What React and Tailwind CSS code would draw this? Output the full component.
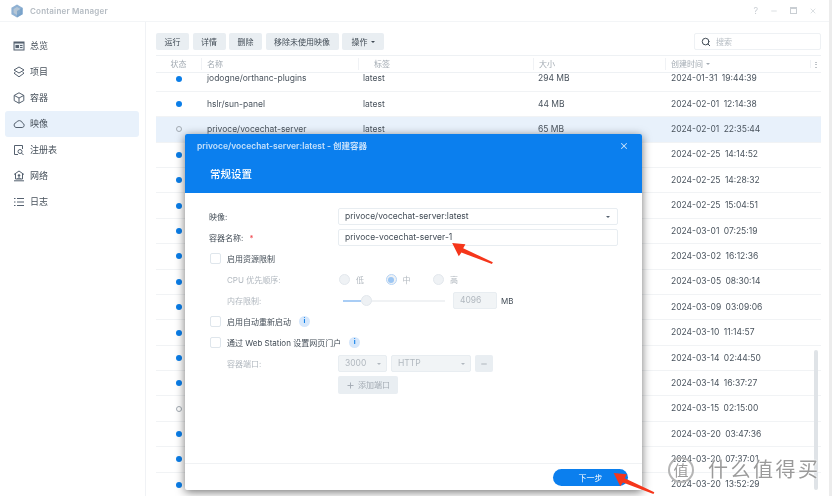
import { Search, X, Minus, Plus } from 'lucide-react';

const FONT = "font-['Inter','Noto_Sans_CJK_SC',sans-serif]";

const rows = [
  ['jodogne/orthanc-plugins', '294 MB', '2024-01-31 19:44:39', true],
  ['hslr/sun-panel', '44 MB', '2024-02-01 12:14:38', true],
  ['privoce/vocechat-server', '65 MB', '2024-02-01 22:35:44', false],
  ['', '', '2024-02-25 14:14:52', true],
  ['', '', '2024-02-25 14:28:32', true],
  ['', '', '2024-02-25 15:04:51', true],
  ['', '', '2024-03-01 07:25:19', true],
  ['', '', '2024-03-02 16:12:36', true],
  ['', '', '2024-03-05 08:30:14', true],
  ['', '', '2024-03-09 03:09:06', true],
  ['', '', '2024-03-10 11:14:57', true],
  ['', '', '2024-03-14 02:44:50', true],
  ['', '', '2024-03-14 16:37:27', true],
  ['', '', '2024-03-15 02:15:00', false],
  ['', '', '2024-03-20 03:47:36', true],
  ['', '', '2024-03-20 07:37:01', true],
  ['', '', '2024-03-20 13:52:29', true],
];

const OverviewIcon = () => (
  <svg width="12" height="12" viewBox="0 0 12 12" fill="none">
    <rect x="0.5" y="1.5" width="11" height="9" fill="#55616f" />
    <rect x="1.5" y="3.5" width="9" height="6" fill="#e8edf1" />
    <rect x="2.5" y="5" width="3.5" height="3" fill="#55616f" />
    <rect x="7" y="5" width="2.5" height="1" fill="#55616f" />
    <rect x="7" y="7" width="2.5" height="1" fill="#55616f" />
  </svg>
);
const LayersIcon = () => (
  <svg width="12" height="12" viewBox="0 0 12 12" fill="none" stroke="#55616f" strokeWidth="1">
    <path d="M6 1 L11 4 L6 7 L1 4 Z" />
    <path d="M2.5 6 L1 7.2 L6 10.8 L11 7.2 L9.5 6" />
  </svg>
);
const BoxIcon = () => (
  <svg width="12" height="12" viewBox="0 0 12 12" fill="none" stroke="#55616f" strokeWidth="1">
    <path d="M6 0.8 L10.8 3.4 V8.6 L6 11.2 L1.2 8.6 V3.4 Z" />
    <path d="M1.2 3.4 L6 6 L10.8 3.4 M6 6 V11.2" />
  </svg>
);
const CloudIcon = () => (
  <svg width="12" height="12" viewBox="0 0 12 12" fill="none" stroke="#55616f" strokeWidth="1">
    <path d="M3 9.5 H9.2 A2.2 2.2 0 0 0 9.6 5.2 A3.4 3.4 0 0 0 3.2 4.6 A2.5 2.5 0 0 0 3 9.5 Z" />
  </svg>
);
const RegistryIcon = () => (
  <svg width="12" height="12" viewBox="0 0 12 12" fill="none" stroke="#55616f" strokeWidth="1">
    <path d="M5 10.5 H1.5 V1.5 H9.5 V5" />
    <circle cx="7" cy="7.5" r="2" />
    <path d="M8.5 9 L10.5 11" />
  </svg>
);
const NetworkIcon = () => (
  <svg width="12" height="12" viewBox="0 0 12 12" fill="none" stroke="#55616f" strokeWidth="1">
    <path d="M1 4.5 L6 1 L11 4.5" />
    <path d="M2.5 4 V9 H9.5 V4" />
    <circle cx="6" cy="5.5" r="1.3" fill="#55616f" stroke="none" />
    <path d="M4.5 9 C4.5 7.5 7.5 7.5 7.5 9" />
    <path d="M1 10.8 H11" />
  </svg>
);
const LogIcon = () => (
  <svg width="12" height="12" viewBox="0 0 12 12" fill="none" stroke="#55616f" strokeWidth="1">
    <path d="M1 2.5 H2.5 M4 2.5 H11 M1 6 H2.5 M4 6 H11 M1 9.5 H2.5 M4 9.5 H11" />
  </svg>
);

const navItems = [
  ['总览', OverviewIcon],
  ['项目', LayersIcon],
  ['容器', BoxIcon],
  ['映像', CloudIcon],
  ['注册表', RegistryIcon],
  ['网络', NetworkIcon],
  ['日志', LogIcon],
];

const Logo = () => (
  <svg width="14" height="14" viewBox="0 0 14 14">
    <path d="M7 0.5 L12.6 3.7 V10.3 L7 13.5 L1.4 10.3 V3.7 Z" fill="#8fb1d3" />
    <path d="M7 3 L10.4 5 V9 L7 11 L3.6 9 V5 Z" fill="#b5c6d6" />
    <path d="M7 7 L12.6 3.7 V10.3 L7 13.5 Z" fill="#6f9cc6" opacity="0.7" />
  </svg>
);

const ToolButton = ({ children, className = '' }) => (
  <div className={`h-[17px] rounded-[2px] bg-[#e9eef2] text-[#414b55] text-[8px] flex items-center justify-center ${className}`}>
    {children}
  </div>
);

const Caret = ({ color = '#6b7681' }) => (
  <span
    className="inline-block w-0 h-0 border-x-[2.5px] border-x-transparent border-t-[2.5px]"
    style={{ borderTopColor: color }}
  />
);

const Checkbox = () => (
  <span className="w-[11px] h-[11px] shrink-0 rounded-[2px] border border-[#dfe6ec] bg-white" />
);

const Info = () => (
  <span className="w-[11px] h-[11px] rounded-full bg-[#d6e7fb] text-[#0b7ee8] text-[7px] font-bold flex items-center justify-center">
    i
  </span>
);

const Radio = ({ label, checked, className = '' }) => (
  <span className={`flex items-center gap-[6px] ${className}`}>
    <span className={`w-[11px] h-[11px] rounded-full border flex items-center justify-center ${checked ? 'border-[#b7d5f6] bg-[#eef1f4]' : 'border-[#e3e8ed] bg-[#eff2f5]'}`}>
      {checked && <span className="w-[6px] h-[6px] rounded-full bg-[#9cc6f3]" />}
    </span>
    <span className="text-[#b1b8bf] text-[8px]">{label}</span>
  </span>
);

const FormRow = ({ label, labelClass = 'text-[#414b55]', children }) => (
  <div className="grid grid-cols-[129px_280px] h-[17px] items-center mb-[4px]">
    <div className={`text-[8px] ${labelClass}`}>{label}</div>
    {children}
  </div>
);

const CheckRow = ({ label, info }) => (
  <div className="flex items-center h-[17px] mb-[4px] gap-[6px] pl-px text-[8px] text-[#414b55]">
    <Checkbox />
    <span>{label}</span>
    {info && <span className="ml-[2px]"><Info /></span>}
  </div>
);

const Arrow = ({ className }) => (
  <svg className={`absolute ${className}`} viewBox="0 0 48 26">
    <path d="M1 1 L16 2.5 L13.5 7 L47 23 L46 25 L11.5 12 L8.5 16 Z" fill="#f5361b" />
  </svg>
);

export default function App() {
  return (
    <div className={`relative w-[832px] h-[496px] overflow-hidden bg-white flex flex-col border-r-[3px] border-[#ececec] blur-[0.35px] ${FONT}`}>
      {/* title bar */}
      <div className="h-[22px] shrink-0 flex items-center pl-[10px] pr-[12px] border-b border-[#f3f5f7]">
        <Logo />
        <span className="ml-[6px] text-[8px] font-semibold tracking-[0.2px] text-[#b4bbc2]">Container Manager</span>
        <div className="ml-auto flex items-center gap-[12px] text-[#c9ced3]">
          <span className="text-[9px] leading-none">?</span>
          <Minus size={8} />
          <span className="w-[7px] h-[7px] border border-[#c9ced3] border-t-2" />
          <X size={8} />
        </div>
      </div>

      <div className="flex flex-1 min-h-0">
        {/* sidebar */}
        <aside className="w-[146px] shrink-0 border-r border-[#f0f2f5] pl-[5px] pr-[6px] pt-[11px]">
          {navItems.map(([label, Icon]) => (
            <div
              key={label}
              className={`h-[26px] flex items-center pl-[8px] gap-[5px] rounded-[3px] text-[9px] text-[#46505a] ${label === '映像' ? 'bg-[#e8f1fb]' : ''}`}
            >
              <Icon />
              <span>{label}</span>
            </div>
          ))}
        </aside>

        {/* main */}
        <main className="flex-1 min-w-0 pl-[10px] pr-[8px] pt-[11px] flex flex-col">
          <div className="flex gap-[3.5px] shrink-0">
            <ToolButton className="w-[33px]">运行</ToolButton>
            <ToolButton className="w-[33px]">详情</ToolButton>
            <ToolButton className="w-[33px]">删除</ToolButton>
            <ToolButton className="w-[73px]">移除未使用映像</ToolButton>
            <ToolButton className="w-[42px] gap-[3px]">操作 <Caret color="#414b55" /></ToolButton>
            <div className="ml-auto w-[127px] h-[17px] rounded-[2px] border border-[#eef1f4] flex items-center pl-[6px] gap-[5px] text-[8px] text-[#b4bbc2]">
              <Search size={10} color="#414b55" strokeWidth={2.4} />
              <span>搜索</span>
            </div>
          </div>

          <div className="mt-[5px] h-[18px] shrink-0 border-y border-[#eef1f4] flex items-center text-[8px] text-[#a3abb3]">
            <div className="w-[45px] text-center">状态</div>
            <div className="w-[157px] pl-[5px] border-l border-[#f0f2f5]">名称</div>
            <div className="w-[175px] pl-[15px] border-l border-[#f0f2f5]">标签</div>
            <div className="w-[132px] pl-[5px] border-l border-[#f0f2f5]">大小</div>
            <div className="w-[145px] pl-[5px] border-l border-[#f0f2f5] flex items-center gap-[3px]">创建时间 <Caret color="#a3abb3" /></div>
            <div className="flex-1 border-l border-[#f0f2f5] text-center leading-none text-[#6b7681]">⋮</div>
          </div>

          <div className="relative flex-1 min-h-0 overflow-hidden">
            <div className="-mt-[6.6px]">
              {rows.map(([name, size, date, running], i) => (
                <div
                  key={date}
                  className={`h-[25.4px] flex items-center border-b border-[#f1f3f5] text-[8.5px] text-[#4a545e] ${i === 2 ? 'bg-[#e8f1fb]' : ''}`}
                >
                  <div className="w-[45px] flex justify-center">
                    {running
                      ? <span className="w-[6px] h-[6px] rounded-full bg-[#0b7ee8]" />
                      : <span className="w-[6px] h-[6px] rounded-full border border-[#a3abb3]" />}
                  </div>
                  <div className="w-[157px] pl-[6px]">{name}</div>
                  <div className="w-[175px] pl-[5px]">latest</div>
                  <div className="w-[132px] pl-[5px]">{size}</div>
                  <div className="pl-[6px] [word-spacing:2px]">{date}</div>
                </div>
              ))}
            </div>
            {/* scrollbar */}
            <div className="absolute right-[3px] top-[277px] w-[4px] h-[140px] rounded-full bg-[#dfe3e7]" />
          </div>
        </main>
      </div>

      {/* dialog */}
      <div className="absolute left-[185px] top-[134px] w-[457px] h-[356px] bg-white rounded-[2px] shadow-[0_2px_10px_rgba(0,0,0,0.55)] flex flex-col overflow-hidden">
        <div className="h-[59px] shrink-0 bg-[#0b7fee] px-[12px] pt-[6px]">
          <div className="flex items-center justify-between h-[12px] text-[8.5px] font-semibold text-[#c4e0fb]">
            <span>privoce/vocechat-server:latest - 创建容器</span>
            <X size={10} strokeWidth={2.5} className="mr-px" />
          </div>
          <div className="mt-[15px] pl-[13px] text-[10.5px] font-medium text-white">常规设置</div>
        </div>

        <div className="flex-1 pl-[24px] pt-[15px]">
          <FormRow label="映像:">
            <div className="h-[17px] rounded-[2px] border border-[#e8edf1] flex items-center justify-between pl-[6px] pr-[7px] text-[8.5px] text-[#414b55]">
              <span>privoce/vocechat-server:latest</span>
              <Caret color="#55616f" />
            </div>
          </FormRow>
          <FormRow label={<>容器名称: <span className="ml-[4px] text-[#f0424a]">*</span></>}>
            <div className="h-[17px] rounded-[2px] border border-[#e8edf1] flex items-center pl-[6px] text-[8.5px] text-[#414b55]">
              privoce-vocechat-server-1
            </div>
          </FormRow>
          <CheckRow label="启用资源限制" />
          <FormRow label={<span className="pl-[18px]">CPU 优先顺序:</span>} labelClass="text-[#b1b8bf]">
            <div className="flex">
              <Radio label="低" className="w-[47.5px] pl-px" />
              <Radio label="中" checked className="w-[47.5px]" />
              <Radio label="高" />
            </div>
          </FormRow>
          <FormRow label={<span className="pl-[18px]">内存限制:</span>} labelClass="text-[#b1b8bf]">
            <div className="flex items-center">
              <div className="relative ml-[5px] w-[102px] h-[2px] bg-[#f0f2f4]">
                <div className="w-[18px] h-full bg-[#a9cdf5]" />
                <span className="absolute left-[18px] -top-[4.5px] w-[11px] h-[11px] rounded-full bg-[#eef1f4] border border-[#e3e8ed]" />
              </div>
              <div className="ml-[8px] w-[44px] h-[17px] rounded-[2px] bg-[#f1f4f6] border border-[#e8edf1] flex items-center pl-[6px] text-[8.5px] text-[#b1b8bf]">4096</div>
              <span className="ml-[4px] text-[8px] text-[#414b55]">MB</span>
            </div>
          </FormRow>
          <CheckRow label="启用自动重新启动" info />
          <CheckRow label="通过 Web Station 设置网页门户" info />
          <FormRow label={<span className="pl-[18px]">容器端口:</span>} labelClass="text-[#b1b8bf]">
            <div className="flex gap-[4px]">
              <div className="w-[49px] h-[17px] rounded-[2px] bg-[#f1f4f6] border border-[#e8edf1] flex items-center justify-between pl-[6px] pr-[5px] text-[8.5px] text-[#b1b8bf]">3000 <Caret color="#b1b8bf" /></div>
              <div className="w-[80px] h-[17px] rounded-[2px] bg-[#f1f4f6] border border-[#e8edf1] flex items-center justify-between pl-[6px] pr-[5px] text-[8.5px] text-[#b1b8bf]">HTTP <Caret color="#b1b8bf" /></div>
              <div className="w-[18px] h-[17px] rounded-[2px] bg-[#e9eef2] flex items-center justify-center text-[#a3abb3]"><Minus size={8} strokeWidth={2.5} /></div>
            </div>
          </FormRow>
          <FormRow label="">
            <div className="w-[60px] h-[18px] rounded-[2px] bg-[#e9eef2] flex items-center justify-center gap-[3px] text-[8px] text-[#a3abb3]">
              <Plus size={9} strokeWidth={2.5} />添加端口
            </div>
          </FormRow>
        </div>

        <div className="h-[27px] shrink-0 border-t border-[#f0f2f4] flex justify-end pt-[5px] pr-[14px]">
          <div className="w-[75px] h-[17px] rounded-full bg-[#0b7fee] text-white text-[8px] flex items-center justify-center">下一步</div>
        </div>
      </div>

      {/* annotation arrows */}
      <Arrow className="left-[451px] top-[242px] w-[43px] h-[23px]" />
      <Arrow className="left-[611px] top-[472px] w-[46px] h-[23px]" />

      {/* watermark */}
      <div className="absolute left-[668px] top-[457px] flex items-center gap-[14px] text-[#9a9a9a] text-[20px] leading-none tracking-[2.5px] [text-shadow:0_0_2px_white,0_0_2px_white]">
        <span className="w-[26px] h-[26px] rounded-full border-2 border-[#b5b5b5] flex items-center justify-center text-[15px] tracking-normal">值</span>
        <span>什么值得买</span>
      </div>
    </div>
  );
}
